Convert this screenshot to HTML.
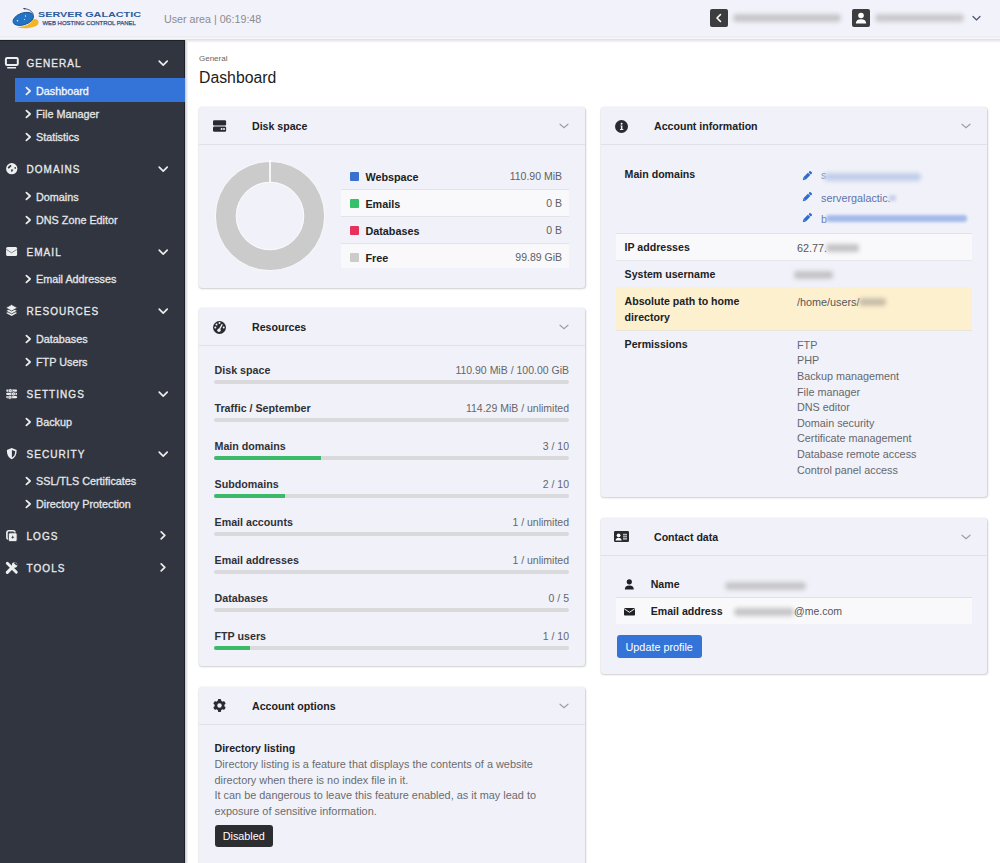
<!DOCTYPE html>
<html><head><meta charset="utf-8"><style>
html,body{margin:0;padding:0;width:1000px;height:863px;overflow:hidden;background:#fff;font-family:"Liberation Sans",sans-serif;}
.t{position:absolute;white-space:nowrap;}
.r{position:absolute;}
</style></head><body>
<div class="r" style="left:0px;top:0px;width:1000px;height:36px;background:#f2f2fa;"></div>
<div class="r" style="left:0px;top:36px;width:1000px;height:2px;background:#eeeef3;"></div>
<div class="r" style="left:0px;top:38px;width:1000px;height:1px;background:#f8f8fc;"></div>
<div class="r" style="left:0px;top:39px;width:1000px;height:4px;background:linear-gradient(#dcdce1,#e6e6ea 30%,#f6f6f8 70%,#ffffff);"></div>
<svg class="r" style="left:8px;top:4px" width="140" height="28" viewBox="0 0 140 28">
<path d="M9 23.3 Q21.5 23 24.5 15.6 Q28.5 13.8 30.6 17.2 Q31.5 22.5 21 24.1 Q14 24.8 9 23.3Z" fill="#f3b426"/>
<ellipse cx="15.3" cy="14.9" rx="10.7" ry="5.9" transform="rotate(-19 15.3 14.9)" fill="#2372c4" stroke="#1d5595" stroke-width="0.9"/>
<circle cx="9.5" cy="16.8" r="0.8" fill="#d8ecff"/><circle cx="17.5" cy="12" r="0.7" fill="#d8ecff"/><circle cx="16.5" cy="15.5" r="0.6" fill="#d8ecff"/>
<path d="M15.5 4.5 Q23 5 25.5 10.5" stroke="#3a4f74" stroke-width="0.9" fill="none"/>
<path d="M15 4 L17.5 4.2 L17 5.8Z" fill="#2a3f64"/>
<text x="30" y="13.1" font-family="Liberation Sans" font-size="7.4" font-weight="700" fill="#2b5c9e" textLength="103" lengthAdjust="spacingAndGlyphs">SERVER GALACTIC</text>
<text x="34.4" y="21.3" font-family="Liberation Sans" font-size="6" font-weight="400" stroke="#33507e" stroke-width="0.25" fill="#33507e" textLength="93.5" lengthAdjust="spacingAndGlyphs">WEB HOSTING CONTROL PANEL</text>
</svg>
<div class="t" style="left:164px;top:12.74px;font-size:10.7px;line-height:13.91px;color:#8b8b8f;">User area | 06:19:48</div>
<div class="r" style="left:710px;top:9px;width:18px;height:18px;background:#3d3d3f;border-radius:2px;"></div>
<svg class="r" style="left:710px;top:9px" width="18" height="18" viewBox="0 0 18 18"><path d="M10.5 5.5 L7 9 L10.5 12.5" stroke="#fff" stroke-width="1.6" fill="none" stroke-linecap="round" stroke-linejoin="round"/></svg>
<div class="r" style="left:733px;top:14px;width:108px;height:8px;background:#c6c6ca;border-radius:4px;filter:blur(2px);"></div>
<div class="r" style="left:852px;top:9px;width:18px;height:18px;background:#3d3d3f;border-radius:2px;"></div>
<svg class="r" style="left:852px;top:9px" width="18" height="18" viewBox="0 0 18 18"><circle cx="9" cy="6.5" r="2.8" fill="#fff"/><path d="M3.8 14.5 Q4 10.2 9 10.2 Q14 10.2 14.2 14.5Z" fill="#fff"/></svg>
<div class="r" style="left:875px;top:14px;width:89px;height:8px;background:#c9c9cd;border-radius:4px;filter:blur(2px);"></div>
<svg class="r" style="left:971px;top:15px" width="11" height="7" viewBox="0 0 11 7"><path d="M2 1.5 L5.5 5 L9 1.5" stroke="#44506c" stroke-width="1.2" fill="none" stroke-linecap="round"/></svg>
<div class="r" style="left:0px;top:40px;width:185px;height:823px;background:#30353f;"></div>
<div class="r" style="left:184px;top:40px;width:1px;height:823px;background:#1d2027;"></div>
<div class="r" style="left:0px;top:40px;width:184px;height:1px;background:#1f2229;"></div>
<div class="r" style="left:185px;top:40px;width:1px;height:823px;background:#d0d0d4;"></div>
<div class="r" style="left:186px;top:40px;width:1px;height:823px;background:#e4e4e7;"></div>
<div class="r" style="left:187px;top:40px;width:1px;height:823px;background:#f2f2f4;"></div>
<div class="t" style="left:26.5px;top:57.23px;font-size:10px;line-height:13.0px;color:#e9eaec;letter-spacing:1.05px;-webkit-text-stroke:0.3px #e9eaec;">GENERAL</div>
<svg class="r" style="left:4px;top:55.8px" width="16" height="14" viewBox="0 0 16 14"><rect x="1.9" y="2" width="11.9" height="6.9" rx="1.2" stroke="#eeeff1" stroke-width="2" fill="none"/><rect x="3.1" y="11" width="9" height="1.4" rx="0.5" fill="#eeeff1"/></svg>
<svg class="r" style="left:157px;top:59.2px" width="12" height="8" viewBox="0 0 12 8"><path d="M2.2 2.2 L6.2 6.1 L10.2 2.2" stroke="#eee" stroke-width="1.7" fill="none" stroke-linecap="round" stroke-linejoin="round"/></svg>
<div class="r" style="left:15px;top:78px;width:170px;height:23.5px;background:#3473d7;"></div>
<svg class="r" style="left:24px;top:86.1px" width="8" height="10" viewBox="0 0 8 10"><path d="M2.4 1.6 L6.1 5 L2.4 8.4" stroke="#eee" stroke-width="1.75" fill="none" stroke-linecap="round" stroke-linejoin="round"/></svg>
<div class="t" style="left:36px;top:84.34px;font-size:10.8px;line-height:14.04px;color:#f4f7ff;-webkit-text-stroke:0.3px currentColor;">Dashboard</div>
<svg class="r" style="left:24px;top:109px" width="8" height="10" viewBox="0 0 8 10"><path d="M2.4 1.6 L6.1 5 L2.4 8.4" stroke="#eee" stroke-width="1.75" fill="none" stroke-linecap="round" stroke-linejoin="round"/></svg>
<div class="t" style="left:36px;top:107.24px;font-size:10.8px;line-height:14.04px;color:#e4e5e8;-webkit-text-stroke:0.3px currentColor;">File Manager</div>
<svg class="r" style="left:24px;top:132px" width="8" height="10" viewBox="0 0 8 10"><path d="M2.4 1.6 L6.1 5 L2.4 8.4" stroke="#eee" stroke-width="1.75" fill="none" stroke-linecap="round" stroke-linejoin="round"/></svg>
<div class="t" style="left:36px;top:130.24px;font-size:10.8px;line-height:14.04px;color:#e4e5e8;-webkit-text-stroke:0.3px currentColor;">Statistics</div>
<div class="t" style="left:26.5px;top:163.23px;font-size:10px;line-height:13.0px;color:#e9eaec;letter-spacing:1.05px;-webkit-text-stroke:0.3px #e9eaec;">DOMAINS</div>
<svg class="r" style="left:4px;top:161.8px" width="16" height="14" viewBox="0 0 16 14"><circle cx="7.75" cy="6.65" r="5.65" fill="#eeeff1"/><path d="M4.7 5.6 L6.5 3.9" stroke="#30353f" stroke-width="1.9" stroke-linecap="round"/><path d="M6.9 7.5 L9.3 7.5 Q8.6 9.2 7.7 10.3 Q7.1 9 6.9 7.5Z" fill="#30353f"/><circle cx="11.2" cy="5.95" r="0.85" fill="#30353f"/></svg>
<svg class="r" style="left:157px;top:165.2px" width="12" height="8" viewBox="0 0 12 8"><path d="M2.2 2.2 L6.2 6.1 L10.2 2.2" stroke="#eee" stroke-width="1.7" fill="none" stroke-linecap="round" stroke-linejoin="round"/></svg>
<svg class="r" style="left:24px;top:191.4px" width="8" height="10" viewBox="0 0 8 10"><path d="M2.4 1.6 L6.1 5 L2.4 8.4" stroke="#eee" stroke-width="1.75" fill="none" stroke-linecap="round" stroke-linejoin="round"/></svg>
<div class="t" style="left:36px;top:189.64px;font-size:10.8px;line-height:14.04px;color:#e4e5e8;-webkit-text-stroke:0.3px currentColor;">Domains</div>
<svg class="r" style="left:24px;top:214.5px" width="8" height="10" viewBox="0 0 8 10"><path d="M2.4 1.6 L6.1 5 L2.4 8.4" stroke="#eee" stroke-width="1.75" fill="none" stroke-linecap="round" stroke-linejoin="round"/></svg>
<div class="t" style="left:36px;top:212.74px;font-size:10.8px;line-height:14.04px;color:#e4e5e8;-webkit-text-stroke:0.3px currentColor;">DNS Zone Editor</div>
<div class="t" style="left:26.5px;top:245.84px;font-size:10px;line-height:13.0px;color:#e9eaec;letter-spacing:1.05px;-webkit-text-stroke:0.3px #e9eaec;">EMAIL</div>
<svg class="r" style="left:4px;top:245.7px" width="16" height="14" viewBox="0 0 16 14"><rect x="2.1" y="1" width="11" height="9.1" rx="1.5" fill="#eeeff1"/><path d="M2.3 3.4 L7.6 6.8 L12.9 3.4" stroke="#7d8189" stroke-width="0.9" fill="none"/></svg>
<svg class="r" style="left:157px;top:247.8px" width="12" height="8" viewBox="0 0 12 8"><path d="M2.2 2.2 L6.2 6.1 L10.2 2.2" stroke="#eee" stroke-width="1.7" fill="none" stroke-linecap="round" stroke-linejoin="round"/></svg>
<svg class="r" style="left:24px;top:274px" width="8" height="10" viewBox="0 0 8 10"><path d="M2.4 1.6 L6.1 5 L2.4 8.4" stroke="#eee" stroke-width="1.75" fill="none" stroke-linecap="round" stroke-linejoin="round"/></svg>
<div class="t" style="left:36px;top:272.24px;font-size:10.8px;line-height:14.04px;color:#e4e5e8;-webkit-text-stroke:0.3px currentColor;">Email Addresses</div>
<div class="t" style="left:26.5px;top:305.04px;font-size:10px;line-height:13.0px;color:#e9eaec;letter-spacing:1.05px;-webkit-text-stroke:0.3px #e9eaec;">RESOURCES</div>
<svg class="r" style="left:4px;top:304.2px" width="16" height="14" viewBox="0 0 16 14"><path d="M7.6 6.2 L13.1 9.1 L7.6 12 L2.1 9.1Z" fill="#eeeff1"/><path d="M7.6 3.8 L13.5 6.8 L7.6 9.8 L1.7 6.8Z" fill="#eeeff1" stroke="#30353f" stroke-width="0.8"/><path d="M7.6 0.6 L13.5 3.8 L7.6 7 L1.7 3.8Z" fill="#eeeff1" stroke="#30353f" stroke-width="0.8"/></svg>
<svg class="r" style="left:157px;top:307px" width="12" height="8" viewBox="0 0 12 8"><path d="M2.2 2.2 L6.2 6.1 L10.2 2.2" stroke="#eee" stroke-width="1.7" fill="none" stroke-linecap="round" stroke-linejoin="round"/></svg>
<svg class="r" style="left:24px;top:333.5px" width="8" height="10" viewBox="0 0 8 10"><path d="M2.4 1.6 L6.1 5 L2.4 8.4" stroke="#eee" stroke-width="1.75" fill="none" stroke-linecap="round" stroke-linejoin="round"/></svg>
<div class="t" style="left:36px;top:331.74px;font-size:10.8px;line-height:14.04px;color:#e4e5e8;-webkit-text-stroke:0.3px currentColor;">Databases</div>
<svg class="r" style="left:24px;top:356.7px" width="8" height="10" viewBox="0 0 8 10"><path d="M2.4 1.6 L6.1 5 L2.4 8.4" stroke="#eee" stroke-width="1.75" fill="none" stroke-linecap="round" stroke-linejoin="round"/></svg>
<div class="t" style="left:36px;top:354.94px;font-size:10.8px;line-height:14.04px;color:#e4e5e8;-webkit-text-stroke:0.3px currentColor;">FTP Users</div>
<div class="t" style="left:26.5px;top:387.64px;font-size:10px;line-height:13.0px;color:#e9eaec;letter-spacing:1.05px;-webkit-text-stroke:0.3px #e9eaec;">SETTINGS</div>
<svg class="r" style="left:4px;top:387.7px" width="16" height="14" viewBox="0 0 16 14"><g fill="#eeeff1"><rect x="2.2" y="1.6" width="10.9" height="2.2" rx="1.1"/><rect x="2.2" y="4.8" width="10.9" height="2.2" rx="1.1"/><rect x="2.2" y="8.1" width="10.9" height="2.2" rx="1.1"/></g><g fill="#eeeff1" stroke="#30353f" stroke-width="0.6"><circle cx="6.3" cy="2.7" r="2"/><circle cx="9.5" cy="5.9" r="2"/><circle cx="5.9" cy="9.2" r="2"/></g><g fill="#8a8d94"><circle cx="6.3" cy="2.7" r="0.6"/><circle cx="9.5" cy="5.9" r="0.6"/><circle cx="5.9" cy="9.2" r="0.6"/></g></svg>
<svg class="r" style="left:157px;top:389.6px" width="12" height="8" viewBox="0 0 12 8"><path d="M2.2 2.2 L6.2 6.1 L10.2 2.2" stroke="#eee" stroke-width="1.7" fill="none" stroke-linecap="round" stroke-linejoin="round"/></svg>
<svg class="r" style="left:24px;top:416.7px" width="8" height="10" viewBox="0 0 8 10"><path d="M2.4 1.6 L6.1 5 L2.4 8.4" stroke="#eee" stroke-width="1.75" fill="none" stroke-linecap="round" stroke-linejoin="round"/></svg>
<div class="t" style="left:36px;top:414.94px;font-size:10.8px;line-height:14.04px;color:#e4e5e8;-webkit-text-stroke:0.3px currentColor;">Backup</div>
<div class="t" style="left:26.5px;top:447.84px;font-size:10px;line-height:13.0px;color:#e9eaec;letter-spacing:1.05px;-webkit-text-stroke:0.3px #e9eaec;">SECURITY</div>
<svg class="r" style="left:4px;top:446.7px" width="16" height="14" viewBox="0 0 16 14"><path d="M7.75 1 L12.6 2.9 Q13 9.3 7.75 12.3 Q2.5 9.3 2.9 2.9Z" fill="#eeeff1"/><path d="M7.9 3 L11.2 4.2 Q11.2 8.9 7.9 10.6Z" fill="#30353f"/></svg>
<svg class="r" style="left:157px;top:449.8px" width="12" height="8" viewBox="0 0 12 8"><path d="M2.2 2.2 L6.2 6.1 L10.2 2.2" stroke="#eee" stroke-width="1.7" fill="none" stroke-linecap="round" stroke-linejoin="round"/></svg>
<svg class="r" style="left:24px;top:476px" width="8" height="10" viewBox="0 0 8 10"><path d="M2.4 1.6 L6.1 5 L2.4 8.4" stroke="#eee" stroke-width="1.75" fill="none" stroke-linecap="round" stroke-linejoin="round"/></svg>
<div class="t" style="left:36px;top:474.24px;font-size:10.8px;line-height:14.04px;color:#e4e5e8;-webkit-text-stroke:0.3px currentColor;">SSL/TLS Certificates</div>
<svg class="r" style="left:24px;top:499.2px" width="8" height="10" viewBox="0 0 8 10"><path d="M2.4 1.6 L6.1 5 L2.4 8.4" stroke="#eee" stroke-width="1.75" fill="none" stroke-linecap="round" stroke-linejoin="round"/></svg>
<div class="t" style="left:36px;top:497.44px;font-size:10.8px;line-height:14.04px;color:#e4e5e8;-webkit-text-stroke:0.3px currentColor;">Directory Protection</div>
<div class="t" style="left:26.5px;top:530.03px;font-size:10px;line-height:13.0px;color:#e9eaec;letter-spacing:1.05px;-webkit-text-stroke:0.3px #e9eaec;">LOGS</div>
<svg class="r" style="left:4px;top:528.5px" width="16" height="14" viewBox="0 0 16 14"><rect x="2.95" y="1.75" width="8" height="8.3" rx="1.8" stroke="#eeeff1" stroke-width="1.7" fill="none"/><rect x="4.4" y="3.8" width="8.7" height="8.8" rx="1.6" fill="#eeeff1" stroke="#30353f" stroke-width="0.8"/><path d="M8.75 6.3 L9.3 7.7 L10.6 8.2 L9.3 8.7 L8.75 10.1 L8.2 8.7 L6.9 8.2 L8.2 7.7Z" fill="#30353f"/></svg>
<svg class="r" style="left:159px;top:530px" width="9" height="10" viewBox="0 0 9 10"><path d="M2.2 1.8 L5.8 5.3 L2.2 8.8" stroke="#eee" stroke-width="1.7" fill="none" stroke-linecap="round" stroke-linejoin="round"/></svg>
<div class="t" style="left:26.5px;top:561.83px;font-size:10px;line-height:13.0px;color:#e9eaec;letter-spacing:1.05px;-webkit-text-stroke:0.3px #e9eaec;">TOOLS</div>
<svg class="r" style="left:4px;top:560.7px" width="16" height="14" viewBox="0 0 16 14"><path d="M3.3 2.3 L12.3 11.3" stroke="#eeeff1" stroke-width="2.9" stroke-linecap="round"/><path d="M3.3 11.3 L9.3 5.3" stroke="#eeeff1" stroke-width="3.1" stroke-linecap="round" stroke-opacity="1"/><path d="M3.3 11.3 L9.3 5.3" stroke="#30353f" stroke-width="0.6" transform="translate(-1.3,-1.3)" stroke-opacity="0"/><circle cx="10.6" cy="4" r="2.7" fill="#eeeff1"/><path d="M11 1 L13.6 3.6 L12.4 4.6 L10 2.2Z" fill="#30353f"/></svg>
<svg class="r" style="left:159px;top:561.8px" width="9" height="10" viewBox="0 0 9 10"><path d="M2.2 1.8 L5.8 5.3 L2.2 8.8" stroke="#eee" stroke-width="1.7" fill="none" stroke-linecap="round" stroke-linejoin="round"/></svg>
<div class="t" style="left:199px;top:54.03px;font-size:8px;line-height:10.4px;color:#666;">General</div>
<div class="t" style="left:199px;top:68.16px;font-size:15.8px;line-height:20.54px;color:#1c1c1c;">Dashboard</div>
<div class="r" style="left:199px;top:107px;width:386px;height:181px;background:#f1f2f9;border-radius:3px;box-shadow:0.5px 1px 2px rgba(0,0,0,0.17), 0 0 0 0.5px rgba(0,0,0,0.06);"></div>
<div class="r" style="left:199px;top:144px;width:386px;height:1px;background:#dfe1e8;"></div>
<svg class="r" style="left:213px;top:120.2px" width="14" height="12" viewBox="0 0 14 12"><rect x="0" y="0.3" width="13.1" height="5.2" rx="1.2" fill="#2a2b30"/><rect x="0" y="6.5" width="13.1" height="5.2" rx="1.2" fill="#2a2b30"/><circle cx="8.6" cy="9.1" r="1" fill="#f1f2f9"/><circle cx="11" cy="9.1" r="1" fill="#f1f2f9"/></svg>
<div class="t" style="left:252px;top:120.24px;font-size:10.6px;line-height:13.78px;color:#202124;font-weight:700;">Disk space</div>
<svg class="r" style="left:558px;top:122.5px" width="11" height="7" viewBox="0 0 11 7"><path d="M2 1.2 L6 4.8 L10 1.2" stroke="#9c9ea5" stroke-width="1.15" fill="none" stroke-linecap="round"/></svg>
<svg class="r" style="left:214px;top:160px" width="112" height="112" viewBox="0 0 112 112"><circle cx="56" cy="56" r="44.2" stroke="#cbcbcb" stroke-width="20.5" fill="none"/><circle cx="56" cy="56" r="54.6" stroke="#fff" stroke-width="0.8" fill="none"/><circle cx="56" cy="56" r="33.8" stroke="#fff" stroke-width="0.8" fill="none"/><rect x="55.2" y="0" width="1.6" height="23" fill="#fff"/></svg>
<div class="r" style="left:350px;top:172px;width:9px;height:9px;background:#3a70cf;border-radius:1px;"></div>
<div class="t" style="left:365.4px;top:169.94px;font-size:10.8px;line-height:14.04px;color:#202124;font-weight:700;">Webspace</div>
<div class="t" style="right:438px;top:170.24px;font-size:10.5px;line-height:13.65px;color:#606064;text-align:right;">110.90 MiB</div>
<div class="r" style="left:341px;top:189px;width:228px;height:27px;background:#f9f9fb;"></div>
<div class="r" style="left:341px;top:189px;width:228px;height:1px;background:#e2e3e8;"></div>
<div class="r" style="left:350px;top:199px;width:9px;height:9px;background:#35c06a;border-radius:1px;"></div>
<div class="t" style="left:365.4px;top:196.94px;font-size:10.8px;line-height:14.04px;color:#202124;font-weight:700;">Emails</div>
<div class="t" style="right:438px;top:197.24px;font-size:10.5px;line-height:13.65px;color:#606064;text-align:right;">0 B</div>
<div class="r" style="left:341px;top:216px;width:228px;height:1px;background:#e2e3e8;"></div>
<div class="r" style="left:350px;top:226px;width:9px;height:9px;background:#e8305a;border-radius:1px;"></div>
<div class="t" style="left:365.4px;top:223.94px;font-size:10.8px;line-height:14.04px;color:#202124;font-weight:700;">Databases</div>
<div class="t" style="right:438px;top:224.24px;font-size:10.5px;line-height:13.65px;color:#606064;text-align:right;">0 B</div>
<div class="r" style="left:341px;top:243px;width:228px;height:25px;background:#f9f9fb;"></div>
<div class="r" style="left:341px;top:243px;width:228px;height:1px;background:#e2e3e8;"></div>
<div class="r" style="left:350px;top:253px;width:9px;height:9px;background:#cbcbcb;border-radius:1px;"></div>
<div class="t" style="left:365.4px;top:250.94px;font-size:10.8px;line-height:14.04px;color:#202124;font-weight:700;">Free</div>
<div class="t" style="right:438px;top:251.24px;font-size:10.5px;line-height:13.65px;color:#606064;text-align:right;">99.89 GiB</div>
<div class="r" style="left:199px;top:308px;width:386px;height:358px;background:#f1f2f9;border-radius:3px;box-shadow:0.5px 1px 2px rgba(0,0,0,0.17), 0 0 0 0.5px rgba(0,0,0,0.06);"></div>
<div class="r" style="left:199px;top:345px;width:386px;height:1px;background:#dfe1e8;"></div>
<svg class="r" style="left:213px;top:320.8px" width="13" height="13" viewBox="0 0 13 13"><circle cx="6.5" cy="6.5" r="6.5" fill="#2a2b30"/><circle cx="2.3" cy="6.5" r="1" fill="#f1f2f9"/><circle cx="3.5" cy="3.4" r="1" fill="#f1f2f9"/><circle cx="6.5" cy="2" r="1" fill="#f1f2f9"/><circle cx="10.7" cy="6.5" r="1" fill="#f1f2f9"/><path d="M6 9.2 L9 3.6" stroke="#f1f2f9" stroke-width="1.3" stroke-linecap="round"/><circle cx="6" cy="9.2" r="1.7" fill="#f1f2f9"/></svg>
<div class="t" style="left:252px;top:321.24px;font-size:10.6px;line-height:13.78px;color:#202124;font-weight:700;">Resources</div>
<svg class="r" style="left:558px;top:323.5px" width="11" height="7" viewBox="0 0 11 7"><path d="M2 1.2 L6 4.8 L10 1.2" stroke="#9c9ea5" stroke-width="1.15" fill="none" stroke-linecap="round"/></svg>
<div class="t" style="left:214.5px;top:364.04px;font-size:10.7px;line-height:13.91px;color:#303136;font-weight:700;">Disk space</div>
<div class="t" style="right:431px;top:364.04px;font-size:10.5px;line-height:13.65px;color:#66666a;text-align:right;">110.90 MiB / 100.00 GiB</div>
<div class="r" style="left:214px;top:380.0px;width:355px;height:4px;background:#dadadd;border-radius:2px;overflow:hidden;"></div>
<div class="t" style="left:214.5px;top:402.04px;font-size:10.7px;line-height:13.91px;color:#303136;font-weight:700;">Traffic / September</div>
<div class="t" style="right:431px;top:402.04px;font-size:10.5px;line-height:13.65px;color:#66666a;text-align:right;">114.29 MiB / unlimited</div>
<div class="r" style="left:214px;top:418.0px;width:355px;height:4px;background:#dadadd;border-radius:2px;overflow:hidden;"></div>
<div class="t" style="left:214.5px;top:440.04px;font-size:10.7px;line-height:13.91px;color:#303136;font-weight:700;">Main domains</div>
<div class="t" style="right:431px;top:440.04px;font-size:10.5px;line-height:13.65px;color:#66666a;text-align:right;">3 / 10</div>
<div class="r" style="left:214px;top:456.0px;width:355px;height:4px;background:#dadadd;border-radius:2px;overflow:hidden;"></div>
<div class="r" style="left:214px;top:456.0px;width:106.5px;height:4px;background:#3cba6a;border-radius:2px 0 0 2px;"></div>
<div class="t" style="left:214.5px;top:478.04px;font-size:10.7px;line-height:13.91px;color:#303136;font-weight:700;">Subdomains</div>
<div class="t" style="right:431px;top:478.04px;font-size:10.5px;line-height:13.65px;color:#66666a;text-align:right;">2 / 10</div>
<div class="r" style="left:214px;top:494.0px;width:355px;height:4px;background:#dadadd;border-radius:2px;overflow:hidden;"></div>
<div class="r" style="left:214px;top:494.0px;width:71.0px;height:4px;background:#3cba6a;border-radius:2px 0 0 2px;"></div>
<div class="t" style="left:214.5px;top:516.04px;font-size:10.7px;line-height:13.91px;color:#303136;font-weight:700;">Email accounts</div>
<div class="t" style="right:431px;top:516.04px;font-size:10.5px;line-height:13.65px;color:#66666a;text-align:right;">1 / unlimited</div>
<div class="r" style="left:214px;top:532.0px;width:355px;height:4px;background:#dadadd;border-radius:2px;overflow:hidden;"></div>
<div class="t" style="left:214.5px;top:554.04px;font-size:10.7px;line-height:13.91px;color:#303136;font-weight:700;">Email addresses</div>
<div class="t" style="right:431px;top:554.04px;font-size:10.5px;line-height:13.65px;color:#66666a;text-align:right;">1 / unlimited</div>
<div class="r" style="left:214px;top:570.0px;width:355px;height:4px;background:#dadadd;border-radius:2px;overflow:hidden;"></div>
<div class="t" style="left:214.5px;top:592.04px;font-size:10.7px;line-height:13.91px;color:#303136;font-weight:700;">Databases</div>
<div class="t" style="right:431px;top:592.04px;font-size:10.5px;line-height:13.65px;color:#66666a;text-align:right;">0 / 5</div>
<div class="r" style="left:214px;top:608.0px;width:355px;height:4px;background:#dadadd;border-radius:2px;overflow:hidden;"></div>
<div class="t" style="left:214.5px;top:630.04px;font-size:10.7px;line-height:13.91px;color:#303136;font-weight:700;">FTP users</div>
<div class="t" style="right:431px;top:630.04px;font-size:10.5px;line-height:13.65px;color:#66666a;text-align:right;">1 / 10</div>
<div class="r" style="left:214px;top:646.0px;width:355px;height:4px;background:#dadadd;border-radius:2px;overflow:hidden;"></div>
<div class="r" style="left:214px;top:646.0px;width:35.5px;height:4px;background:#3cba6a;border-radius:2px 0 0 2px;"></div>
<div class="r" style="left:199px;top:687px;width:386px;height:200px;background:#f1f2f9;border-radius:3px;box-shadow:0.5px 1px 2px rgba(0,0,0,0.17), 0 0 0 0.5px rgba(0,0,0,0.06);"></div>
<div class="r" style="left:199px;top:724px;width:386px;height:1px;background:#dfe1e8;"></div>
<svg class="r" style="left:212.8px;top:699.2px" width="13" height="13" viewBox="0 0 13 13"><g transform="translate(6.5 6.5)"><circle r="4.9" fill="#2a2b30"/><rect x="-1.6" y="-6.4" width="3.2" height="3.4" rx="0.9" fill="#2a2b30" transform="rotate(0)"/><rect x="-1.6" y="-6.4" width="3.2" height="3.4" rx="0.9" fill="#2a2b30" transform="rotate(60)"/><rect x="-1.6" y="-6.4" width="3.2" height="3.4" rx="0.9" fill="#2a2b30" transform="rotate(120)"/><rect x="-1.6" y="-6.4" width="3.2" height="3.4" rx="0.9" fill="#2a2b30" transform="rotate(180)"/><rect x="-1.6" y="-6.4" width="3.2" height="3.4" rx="0.9" fill="#2a2b30" transform="rotate(240)"/><rect x="-1.6" y="-6.4" width="3.2" height="3.4" rx="0.9" fill="#2a2b30" transform="rotate(300)"/><circle r="2.2" fill="#f1f2f9"/></g></svg>
<div class="t" style="left:252px;top:700.24px;font-size:10.6px;line-height:13.78px;color:#202124;font-weight:700;">Account options</div>
<svg class="r" style="left:558px;top:702.5px" width="11" height="7" viewBox="0 0 11 7"><path d="M2 1.2 L6 4.8 L10 1.2" stroke="#9c9ea5" stroke-width="1.15" fill="none" stroke-linecap="round"/></svg>
<div class="t" style="left:214.5px;top:741.84px;font-size:10.6px;line-height:13.78px;color:#202124;font-weight:700;">Directory listing</div>
<div class="t" style="left:214.5px;top:757.34px;font-size:10.9px;line-height:14.17px;color:#6a6b70;">Directory listing is a feature that displays the contents of a website</div>
<div class="t" style="left:214.5px;top:772.84px;font-size:10.9px;line-height:14.17px;color:#6a6b70;">directory when there is no index file in it.</div>
<div class="t" style="left:214.5px;top:788.34px;font-size:10.9px;line-height:14.17px;color:#6a6b70;">It can be dangerous to leave this feature enabled, as it may lead to</div>
<div class="t" style="left:214.5px;top:803.84px;font-size:10.9px;line-height:14.17px;color:#6a6b70;">exposure of sensitive information.</div>
<div class="r" style="left:214.5px;top:824.5px;width:58.5px;height:22.5px;background:#2c2d30;border-radius:3px;"></div>
<div class="t" style="left:243.7px;top:829.24px;font-size:10.8px;line-height:14.04px;color:#fff;transform:translateX(-50%);">Disabled</div>
<div class="r" style="left:601px;top:107px;width:386px;height:390px;background:#f1f2f9;border-radius:3px;box-shadow:0.5px 1px 2px rgba(0,0,0,0.17), 0 0 0 0.5px rgba(0,0,0,0.06);"></div>
<div class="r" style="left:601px;top:144px;width:386px;height:1px;background:#dfe1e8;"></div>
<svg class="r" style="left:614.9px;top:119.5px" width="13" height="13" viewBox="0 0 13 13"><circle cx="6.5" cy="6.5" r="6.5" fill="#2a2b30"/><circle cx="6.6" cy="3.8" r="1" fill="#f1f2f9"/><path d="M5.4 5.4 H7.4 V8.9 H8.3 V9.9 H5 V8.9 H5.9 V6.3 H5.4Z" fill="#f1f2f9"/></svg>
<div class="t" style="left:654px;top:120.24px;font-size:10.6px;line-height:13.78px;color:#202124;font-weight:700;">Account information</div>
<svg class="r" style="left:960px;top:122.5px" width="11" height="7" viewBox="0 0 11 7"><path d="M2 1.2 L6 4.8 L10 1.2" stroke="#9c9ea5" stroke-width="1.15" fill="none" stroke-linecap="round"/></svg>
<div class="t" style="left:624.6px;top:167.64px;font-size:10.6px;line-height:13.78px;color:#202124;font-weight:700;">Main domains</div>
<svg class="r" style="left:800.7px;top:170.2px" width="12" height="12" viewBox="0 0 12 12"><g transform="rotate(45 6 6)"><rect x="4.3" y="0" width="3.4" height="2.3" rx="1" fill="#2e6bd1"/><rect x="4.3" y="3" width="3.4" height="6.3" fill="#2e6bd1"/><path d="M4.3 9.3 H7.7 L6 12Z" fill="#2e6bd1"/></g></svg>
<svg class="r" style="left:800.7px;top:191.2px" width="12" height="12" viewBox="0 0 12 12"><g transform="rotate(45 6 6)"><rect x="4.3" y="0" width="3.4" height="2.3" rx="1" fill="#2e6bd1"/><rect x="4.3" y="3" width="3.4" height="6.3" fill="#2e6bd1"/><path d="M4.3 9.3 H7.7 L6 12Z" fill="#2e6bd1"/></g></svg>
<svg class="r" style="left:800.7px;top:212.2px" width="12" height="12" viewBox="0 0 12 12"><g transform="rotate(45 6 6)"><rect x="4.3" y="0" width="3.4" height="2.3" rx="1" fill="#2e6bd1"/><rect x="4.3" y="3" width="3.4" height="6.3" fill="#2e6bd1"/><path d="M4.3 9.3 H7.7 L6 12Z" fill="#2e6bd1"/></g></svg>
<div class="t" style="left:821px;top:168.14px;font-size:10.8px;line-height:14.04px;color:#8090b8;">s</div>
<div class="r" style="left:824px;top:172.5px;width:97px;height:8px;background:#c0cdea;border-radius:4px;filter:blur(2px);"></div>
<div class="t" style="left:821px;top:190.64px;font-size:10.8px;line-height:14.04px;color:#5b72ad;">servergalactic.</div>
<div class="r" style="left:889px;top:195px;width:7px;height:6px;background:#c9d3ea;filter:blur(1.5px);"></div>
<div class="t" style="left:821px;top:211.64px;font-size:10.8px;line-height:14.04px;color:#6a7fb5;">b</div>
<div class="r" style="left:826px;top:214.5px;width:141px;height:7px;background:#a4bbea;border-radius:3px;filter:blur(1.8px);"></div>
<div class="r" style="left:616px;top:233px;width:356px;height:27px;background:#f9f9fb;"></div>
<div class="r" style="left:616px;top:233px;width:356px;height:1px;background:#e2e3e8;"></div>
<div class="r" style="left:616px;top:260px;width:356px;height:1px;background:#e6e7ec;"></div>
<div class="t" style="left:624.6px;top:241.44px;font-size:10.6px;line-height:13.78px;color:#202124;font-weight:700;">IP addresses</div>
<div class="t" style="left:797px;top:241.24px;font-size:10.8px;line-height:14.04px;color:#55565a;">62.77.</div>
<div class="r" style="left:826px;top:244px;width:33px;height:8px;background:#c4c4c7;border-radius:3px;filter:blur(2px);"></div>
<div class="t" style="left:624.6px;top:268.34px;font-size:10.6px;line-height:13.78px;color:#202124;font-weight:700;">System username</div>
<div class="r" style="left:794px;top:270.5px;width:39px;height:8px;background:#c4c4c7;border-radius:3px;filter:blur(2px);"></div>
<div class="r" style="left:616px;top:286.5px;width:356px;height:43px;background:#fdf0cf;"></div>
<div class="t" style="left:624.6px;top:295.14px;font-size:10.6px;line-height:13.78px;color:#202124;font-weight:700;">Absolute path to home</div>
<div class="t" style="left:624.6px;top:310.74px;font-size:10.6px;line-height:13.78px;color:#202124;font-weight:700;">directory</div>
<div class="t" style="left:797px;top:294.94px;font-size:10.8px;line-height:14.04px;color:#55565a;">/home/users/</div>
<div class="r" style="left:859px;top:297.5px;width:27px;height:8px;background:#c9c0aa;border-radius:3px;filter:blur(2px);"></div>
<div class="r" style="left:616px;top:329.5px;width:356px;height:1px;background:#e8e4da;"></div>
<div class="t" style="left:624.6px;top:337.84px;font-size:10.6px;line-height:13.78px;color:#202124;font-weight:700;">Permissions</div>
<div class="t" style="left:797px;top:337.64px;font-size:10.8px;line-height:14.04px;color:#66676b;">FTP</div>
<div class="t" style="left:797px;top:353.28px;font-size:10.8px;line-height:14.04px;color:#66676b;">PHP</div>
<div class="t" style="left:797px;top:368.92px;font-size:10.8px;line-height:14.04px;color:#66676b;">Backup management</div>
<div class="t" style="left:797px;top:384.56px;font-size:10.8px;line-height:14.04px;color:#66676b;">File manager</div>
<div class="t" style="left:797px;top:400.20px;font-size:10.8px;line-height:14.04px;color:#66676b;">DNS editor</div>
<div class="t" style="left:797px;top:415.84px;font-size:10.8px;line-height:14.04px;color:#66676b;">Domain security</div>
<div class="t" style="left:797px;top:431.48px;font-size:10.8px;line-height:14.04px;color:#66676b;">Certificate management</div>
<div class="t" style="left:797px;top:447.12px;font-size:10.8px;line-height:14.04px;color:#66676b;">Database remote access</div>
<div class="t" style="left:797px;top:462.76px;font-size:10.8px;line-height:14.04px;color:#66676b;">Control panel access</div>
<div class="r" style="left:601px;top:518px;width:386px;height:156px;background:#f1f2f9;border-radius:3px;box-shadow:0.5px 1px 2px rgba(0,0,0,0.17), 0 0 0 0.5px rgba(0,0,0,0.06);"></div>
<div class="r" style="left:601px;top:555px;width:386px;height:1px;background:#dfe1e8;"></div>
<svg class="r" style="left:613.8px;top:531px" width="15" height="11" viewBox="0 0 15 11"><rect x="0" y="0" width="15" height="11" rx="1.2" fill="#2a2b30"/><circle cx="4.6" cy="4.3" r="1.9" fill="#fff"/><path d="M1.6 9.4 Q1.9 6.8 4.6 6.8 Q7.3 6.8 7.6 9.4Z" fill="#fff"/><rect x="9" y="2.8" width="4" height="5.8" fill="#b9babe"/><rect x="9" y="4.4" width="4" height="0.7" fill="#2a2b30"/><rect x="9" y="6.4" width="4" height="0.7" fill="#2a2b30"/></svg>
<div class="t" style="left:654px;top:531.24px;font-size:10.6px;line-height:13.78px;color:#202124;font-weight:700;">Contact data</div>
<svg class="r" style="left:960px;top:533.5px" width="11" height="7" viewBox="0 0 11 7"><path d="M2 1.2 L6 4.8 L10 1.2" stroke="#9c9ea5" stroke-width="1.15" fill="none" stroke-linecap="round"/></svg>
<svg class="r" style="left:624px;top:579px" width="11" height="11" viewBox="0 0 11 11"><circle cx="5.3" cy="2.8" r="2.6" fill="#202124"/><path d="M0.8 10.5 Q0.8 6.4 5.3 6.4 Q9.8 6.4 9.8 10.5Z" fill="#202124"/></svg>
<div class="t" style="left:650.7px;top:577.94px;font-size:10.6px;line-height:13.78px;color:#202124;font-weight:700;">Name</div>
<div class="r" style="left:725px;top:581.5px;width:81px;height:8px;background:#c6c6ca;border-radius:4px;filter:blur(2px);"></div>
<div class="r" style="left:616px;top:597px;width:356px;height:27px;background:#f9f9fb;"></div>
<div class="r" style="left:616px;top:597px;width:356px;height:1px;background:#e0e1e6;"></div>
<svg class="r" style="left:624px;top:607.5px" width="11" height="8" viewBox="0 0 11 8"><rect x="0" y="0" width="11" height="7.5" rx="0.8" fill="#202124"/><path d="M0.3 0.8 L5.5 4.3 L10.7 0.8" stroke="#f9f9fb" stroke-width="1" fill="none"/></svg>
<div class="t" style="left:650.7px;top:604.74px;font-size:10.6px;line-height:13.78px;color:#202124;font-weight:700;">Email address</div>
<div class="r" style="left:734px;top:608px;width:60px;height:8px;background:#c6c6ca;border-radius:4px;filter:blur(2px);"></div>
<div class="t" style="left:794px;top:604.84px;font-size:10.5px;line-height:13.65px;color:#55565a;">@me.com</div>
<div class="r" style="left:616.5px;top:635px;width:85.5px;height:23px;background:#3474d8;border-radius:3px;"></div>
<div class="t" style="left:659.2px;top:639.64px;font-size:10.8px;line-height:14.04px;color:#fff;transform:translateX(-50%);white-space:nowrap;">Update profile</div>
</body></html>
